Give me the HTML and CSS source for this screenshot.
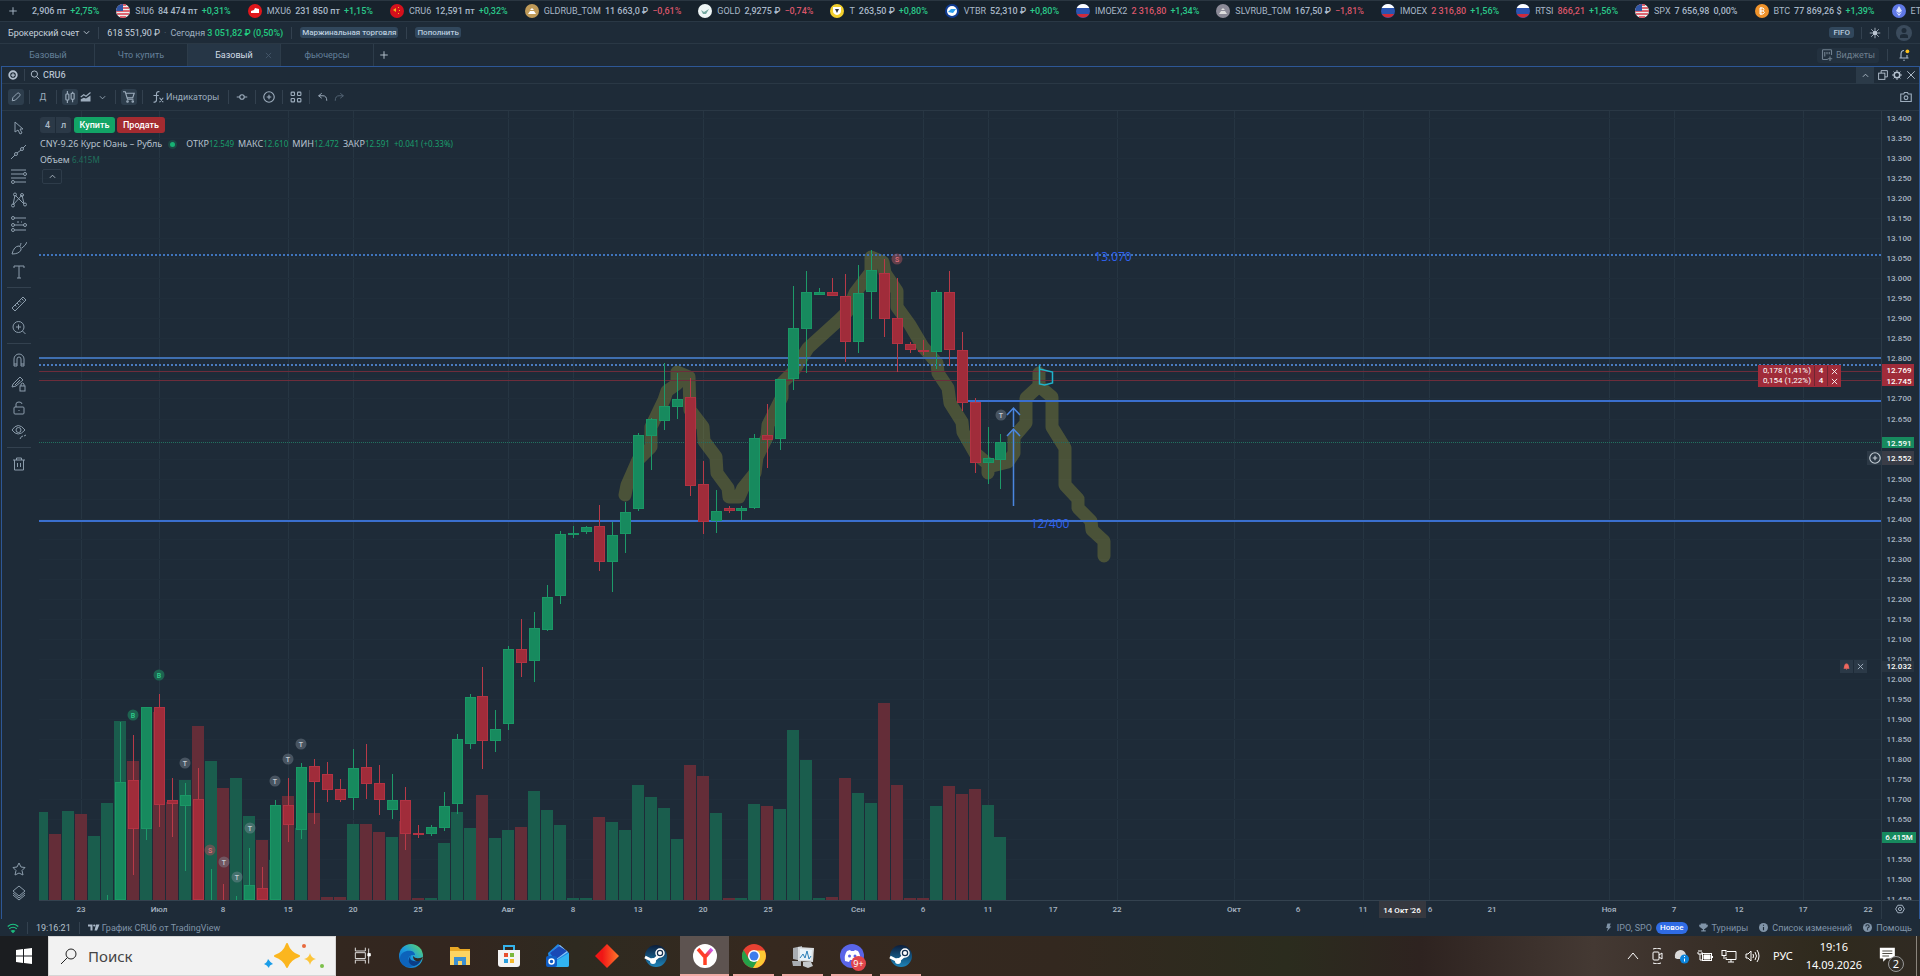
FILE: index.html
```html
<!DOCTYPE html>
<html lang="ru">
  <head>
    <meta charset="UTF-8" />
    <meta name="viewport" content="width=device-width, initial-scale=1.0" />
    <title>CRU6 – Терминал</title>
    <link rel="stylesheet" href="styles.css" />
  </head>
  <body>
    <svg class="sprite" aria-hidden="true">
      <symbol id="i-plus" viewBox="0 0 16 16"><path d="M8 2v12M2 8h12" /></symbol>
      <symbol id="i-down" viewBox="0 0 16 16"><path d="M2 5l6 6 6-6" /></symbol>
      <symbol id="i-up" viewBox="0 0 16 16"><path d="M2 11l6-6 6 6" /></symbol>
      <symbol id="i-close" viewBox="0 0 16 16"><path d="M2 2l12 12M14 2L2 14" /></symbol>
      <symbol id="i-search" viewBox="0 0 16 16"><circle cx="7" cy="6.500" r="5" /><path d="M10.500 10.500L15 15" /></symbol>
      <symbol id="i-link" viewBox="0 0 16 16"><circle cx="8" cy="8" r="6" stroke-width="3" /><path d="M8 5v6M5 8h6" stroke-width="2" /></symbol>
      <symbol id="i-pencil" viewBox="0 0 16 16"><path d="M2 14l1-5 7-7q2-1 3 0l1 1q1 1 0 3l-7 7z" /></symbol>
      <symbol id="i-candles" viewBox="0 0 16 16"><path d="M4.500 0v4M4.500 12v4M11.500 1v2M11.500 11v4" /><rect x="2.500" y="4" width="4" height="8" rx="1" /><rect x="9.500" y="3" width="4" height="8" rx="1" /></symbol>
      <symbol id="i-area" viewBox="0 0 16 16"><path d="M1 14v-3l4-2 3 1 6-4v8z" fill="currentColor" stroke="none" /><path d="M1 8l4-3 3 2 6-5" /></symbol>
      <symbol id="i-cart" viewBox="0 0 16 16"><path d="M0 1h3l3 10h8M3.500 3H15l-2 6H5" /><circle cx="6" cy="14" r="1" /><circle cx="13" cy="14" r="1" /></symbol>
      <symbol id="i-fx" viewBox="0 0 16 16"><path d="M10 1Q6 0 6 4v8q0 3-4 3M2 6h7M10 9l5 6M15 9l-5 6" /></symbol>
      <symbol id="i-compare" viewBox="0 0 16 16"><circle cx="8" cy="8" r="3" /><path d="M1 8h4M11 8h4" /></symbol>
      <symbol id="i-pluscircle" viewBox="0 0 16 16"><circle cx="8" cy="8" r="7" /><path d="M8 5v6M5 8h6" /></symbol>
      <symbol id="i-grid" viewBox="0 0 16 16"><rect x="1.500" y="1.500" width="4.500" height="4.500" rx="1" /><rect x="10" y="1.500" width="4.500" height="4.500" rx="1" /><rect x="1.500" y="10" width="4.500" height="4.500" rx="1" /><rect x="10" y="10" width="4.500" height="4.500" rx="1" /></symbol>
      <symbol id="i-undo" viewBox="0 0 16 16"><path d="M6 2L1 6l5 4M1 6h7q6 0 6 8" /></symbol>
      <symbol id="i-redo" viewBox="0 0 16 16"><path d="M10 2l5 4-5 4M15 6H8q-6 0-6 8" /></symbol>
      <symbol id="i-window" viewBox="0 0 16 16"><path d="M5 5V1h10v10h-4" /><rect x="1" y="5" width="10" height="10" /></symbol>
      <symbol id="i-gear" viewBox="0 0 16 16"><circle cx="8" cy="8" r="4.500" stroke-width="2.500" /><path d="M8 0v3M8 13v3M0 8h3M13 8h3M2.500 2.500l2 2M11.500 11.500l2 2M13.500 2.500l-2 2M4.500 11.500l-2 2" /></symbol>
      <symbol id="i-camera" viewBox="0 0 16 16"><path d="M1 4h4l1-2h4l1 2h4v10H1z" /><circle cx="8" cy="9" r="2.500" /></symbol>
      <symbol id="i-snow" viewBox="0 0 16 16"><path d="M8 1v14M1 8h14M3 3l10 10M13 3L3 13" stroke-width="1" /><circle cx="8" cy="8" r="2" /></symbol>
      <symbol id="i-user" viewBox="0 0 16 16"><circle cx="8" cy="8" r="8" fill="#3b4b5c" stroke="none" /><path d="M8 3a2.400 2.400 0 0 1 0 5a2.400 2.400 0 0 1 0-5M4 13V11q0-2 4-2t4 2v2z" fill="#1e2b38" stroke="none" /></symbol>
      <symbol id="i-widgets" viewBox="0 0 16 16"><path d="M9 14H3q-1 0-1-1V2q0-1 1-1h10q1 0 1 1v6M12 10v6M9 13h6M5 4v6M8 4v3M11 4v3" /></symbol>
      <symbol id="i-bell" viewBox="0 0 16 16"><path d="M2 12h12M4 12V7q0-5 4-5M12 12V8M7 15h2" /><circle cx="12.500" cy="3" r="2.500" fill="#ffc21a" stroke="none" /></symbol>
      <symbol id="i-alarm" viewBox="0 0 16 16"><path d="M2 12q2-2 2-6 0-4 4-4t4 4q0 4 2 6zM7 14h2" fill="#f0685f" stroke="#f0685f" /></symbol>
      <symbol id="i-hex" viewBox="0 0 16 16"><path d="M4.500 2h7L15 8l-3.500 6h-7L1 8z" /><circle cx="8" cy="8" r="2.500" /></symbol>

      <symbol id="t-cursor" viewBox="0 0 16 16"><path d="M4 2v10l3-2 2 4 2-1-2-4h3z" /></symbol>
      <symbol id="t-line" viewBox="0 0 16 16"><path d="M0 15l4-4M6 9l4-3M12 4l3-3" /><circle cx="5" cy="10" r="1.500" /><circle cx="11" cy="5" r="1.500" /></symbol>
      <symbol id="t-fib" viewBox="0 0 16 16"><path d="M0 2h15M0 6h12M0 10h15M4 14h11" /><circle cx="14" cy="6" r="1.500" /><circle cx="2" cy="14" r="1.500" /></symbol>
      <symbol id="t-pattern" viewBox="0 0 16 16"><path d="M2 13L4 3l9 9-2-9-9 10M13 12L9 8" /><circle cx="4" cy="2.500" r="1.500" /><circle cx="11" cy="3" r="1.500" /><circle cx="2" cy="13.500" r="1.500" /><circle cx="14" cy="12.500" r="1.500" /></symbol>
      <symbol id="t-forecast" viewBox="0 0 16 16"><path d="M3 2h12M3 9h10M4 14h11M6 6h2M10 6h1" /><circle cx="2" cy="2" r="1.500" /><circle cx="2" cy="9" r="1.500" /><circle cx="14" cy="9" r="1.500" /><circle cx="2" cy="14" r="1.500" /></symbol>
      <symbol id="t-brush" viewBox="0 0 16 16"><path d="M1 14q2-8 7-8 3 1 2 4-2 4-9 4M9 6q1-2 1-3M11 8q4-3 5-6" /></symbol>
      <symbol id="t-text" viewBox="0 0 16 16"><path d="M3 4V2h10v2M8 2v12M6 14h4" /></symbol>
      <symbol id="t-ruler" viewBox="0 0 16 16"><path d="M1 12L12 1l3 3L4 15zM4 9l1.500 1.500M6 7l2 2M8.500 5l1.500 1.500M10.500 2.500l2 2" /></symbol>
      <symbol id="t-zoom" viewBox="0 0 16 16"><circle cx="7.500" cy="7" r="5.500" /><path d="M11.500 11l3 3M7.500 4.500v5M5 7h5" /></symbol>
      <symbol id="t-magnet" viewBox="0 0 16 16"><path d="M3 14V7a5 5 0 0 1 10 0v7h-3V7q0-2-2-2t-2 2v7zM3 12h3M10 12h3" /></symbol>
      <symbol id="t-penlock" viewBox="0 0 16 16"><path d="M1 11l1-3 7-7 3 3-7 6zM4 9l5-5" /><rect x="9" y="10" width="5" height="5" /><path d="M10 10V8q2-2 3 0v2" /></symbol>
      <symbol id="t-lock" viewBox="0 0 16 16"><rect x="3" y="7" width="10" height="7" rx="1" /><path d="M5 7V4q0-2 3-2t3 2M8 10v1" /></symbol>
      <symbol id="t-eye" viewBox="0 0 16 16"><path d="M1 6q6-9 13 0-7 8-13 0M9 15q1-3 3-3M13 12l2-1" /><circle cx="7.500" cy="6" r="2.500" /></symbol>
      <symbol id="t-trash" viewBox="0 0 16 16"><path d="M2 4h12M5.500 4V2h5v2M3.500 4v10h9V4M6.500 7v4M9.500 7v4" /></symbol>
      <symbol id="t-star" viewBox="0 0 16 16"><path d="M8 2l2 4 4 .5-3 3 1 4.500-4-2-4 2 1-4.500-3-3L6 6z" /></symbol>
      <symbol id="t-layers" viewBox="0 0 16 16"><path d="M8 1l6 5-6 5-6-5zM2 8l6 5 6-5M2 10l6 5 6-5" /></symbol>

      <symbol id="c-us" viewBox="0 0 14 14"><circle cx="7" cy="7" r="7" fill="#eee" /><path d="M1 4h12M0 7h14M1 10h12M4 13h6M4 1h6" stroke="#d83a48" stroke-width="1.500" /><path d="M7 0v7H0a7 7 0 0 1 7-7z" fill="#2f55a5" /></symbol>
      <symbol id="c-mx" viewBox="0 0 14 14"><circle cx="7" cy="7" r="7" fill="#e0161b" /><path d="M3 9V7l3-1 1-2 4 1v4z" fill="#fff" /></symbol>
      <symbol id="c-cn" viewBox="0 0 14 14"><circle cx="7" cy="7" r="7" fill="#d5101c" /><path d="M3 6l3-2v4zM8 3h1v1H8zM9 6h1v1H9zM8 9h1v1H8z" fill="#f3b51b" /></symbol>
      <symbol id="c-gld" viewBox="0 0 14 14"><circle cx="7" cy="7" r="7" fill="#bf9a58" /><path d="M3 10l2-3h4l2 3zM5 6l2-2 2 2z" fill="#fff" /></symbol>
      <symbol id="c-slv" viewBox="0 0 14 14"><circle cx="7" cy="7" r="7" fill="#8b8a97" /><path d="M3 10l2-3h4l2 3zM5 6l2-2 2 2z" fill="#ddd" /></symbol>
      <symbol id="c-gold" viewBox="0 0 14 14"><circle cx="7" cy="7" r="7" fill="#eef5f5" /><path d="M3 6l3 2 5-3-3 5H5z" fill="#74a8a0" /></symbol>
      <symbol id="c-t" viewBox="0 0 14 14"><circle cx="7" cy="7" r="7" fill="#f2cf2c" /><path d="M3 3h8v4q0 3-4 4-4-1-4-4z" fill="#fff" /><path d="M5 5h4L7 9z" fill="#333" /></symbol>
      <symbol id="c-vtb" viewBox="0 0 14 14"><circle cx="7" cy="7" r="7" fill="#0f3b94" /><circle cx="7" cy="7" r="5" fill="#fff" /><path d="M3 8l3-3h5L8 9z" fill="#2ba0ef" /></symbol>
      <symbol id="c-ru" viewBox="0 0 14 14"><circle cx="7" cy="7" r="7" fill="#2b54b0" /><path d="M.7 4a7 7 0 0 1 12.600 0z" fill="#fff" /><path d="M.9 10a7 7 0 0 0 12.200 0z" fill="#cf2b3a" /></symbol>
      <symbol id="c-btc" viewBox="0 0 14 14"><circle cx="7" cy="7" r="7" fill="#f0932b" /><path d="M5 4h3q2 1 0 3 3 1 0 3H5zM5 7h3M6 3v8" stroke="#fff" fill="none" /></symbol>
      <symbol id="c-eth" viewBox="0 0 14 14"><circle cx="7" cy="7" r="7" fill="#5f78e6" /><path d="M7 2l3 5-3 2-3-2zM4 8l3 4 3-4-3 2z" fill="#dfe5ff" /></symbol>

      <linearGradient id="g-edge" x1="0" y1="1" x2="1" y2="0"><stop offset="0" stop-color="#0b5cb8" /><stop offset=".5" stop-color="#1c9ce0" /><stop offset="1" stop-color="#62dc5d" /></linearGradient>
      <linearGradient id="g-red"><stop offset=".3" stop-color="#f01616" /><stop offset="1" stop-color="#ff7a2c" /></linearGradient>
      <linearGradient id="g-steam" x1="0" y1="0" x2="0" y2="1"><stop offset="0" stop-color="#0c1d3a" /><stop offset="1" stop-color="#1d83b9" /></linearGradient>
      <linearGradient id="g-y" x1="0" y1="1" x2="1" y2="0"><stop offset="0" stop-color="#ff4a1c" /><stop offset=".6" stop-color="#ff3a2c" /><stop offset="1" stop-color="#c45cff" /></linearGradient>
      <symbol id="a-steam" viewBox="0 0 24 24"><circle cx="12" cy="12" r="11" fill="url(#g-steam)" /><path d="M1 13l8 4 8-7" stroke="#fff" stroke-width="3" fill="none" /><circle cx="9" cy="17" r="3" fill="#fff" /><circle cx="16" cy="9" r="4" fill="#16304f" stroke="#fff" stroke-width="1.500" /><circle cx="16" cy="9" r="2" fill="#fff" /></symbol>
    </svg>

    <div class="app">
      <div class="ticker" id="ticker">
        <button class="icon-btn" aria-label="Добавить"><svg class="ic"><use href="#i-plus" /></svg></button>
      </div>

      <header class="account">
        <button class="account-name">Брокерский счет <svg class="ic ic-s"><use href="#i-down" /></svg></button>
        <span class="sep"></span>
        <span class="money">618 551,90 ₽</span>
        <span class="dim">·</span>
        <span class="today">Сегодня <b>3 051,82 ₽ (0,50%)</b></span>
        <span class="sep"></span>
        <button class="pill">Маржинальная торговля</button>
        <span class="sep"></span>
        <button class="pill">Пополнить</button>
        <div class="right">
          <span class="pill fifo">FIFO</span>
          <span class="sep"></span>
          <button class="icon-btn" aria-label="Настройки"><svg class="ic"><use href="#i-snow" /></svg></button>
          <span class="sep"></span>
          <button class="icon-btn avatar" aria-label="Профиль"><svg class="ic"><use href="#i-user" /></svg></button>
        </div>
      </header>

      <nav class="tabs">
        <button class="tab">Базовый</button>
        <button class="tab">Что купить</button>
        <button class="tab active">Базовый<svg class="ic ic-s"><use href="#i-close" /></svg></button>
        <button class="tab">фьючерсы</button>
        <button class="icon-btn add" aria-label="Новая вкладка"><svg class="ic ic-m"><use href="#i-plus" /></svg></button>
        <div class="right">
          <button class="widgets"><svg class="ic"><use href="#i-widgets" /></svg>Виджеты</button>
          <span class="sep"></span>
          <button class="icon-btn avatar" aria-label="Уведомления"><svg class="ic"><use href="#i-bell" /></svg></button>
        </div>
      </nav>

      <main class="frame">
        <div class="symbol-row">
          <button class="icon-btn" aria-label="Группа"><svg class="ic ic-m"><use href="#i-link" /></svg></button>
          <span class="sep"></span>
          <button class="symbol"><svg class="ic ic-m"><use href="#i-search" /></svg>CRU6</button>
          <div class="right">
            <button class="fold" aria-label="Свернуть"><svg class="ic ic-s"><use href="#i-up" /></svg></button>
            <button class="icon-btn" aria-label="Окно"><svg class="ic ic-m"><use href="#i-window" /></svg></button>
            <button class="icon-btn" aria-label="Параметры"><svg class="ic ic-m"><use href="#i-gear" /></svg></button>
            <button class="icon-btn" aria-label="Закрыть"><svg class="ic ic-m"><use href="#i-close" /></svg></button>
          </div>
        </div>

        <div class="toolbar">
          <button class="tool on" aria-label="Рисование"><svg class="ic ic-m"><use href="#i-pencil" /></svg></button>
          <span class="sep"></span>
          <button class="tool">Д</button>
          <span class="sep"></span>
          <button class="tool on" aria-label="Свечи"><svg class="ic"><use href="#i-candles" /></svg></button>
          <button class="tool" aria-label="Область"><svg class="ic"><use href="#i-area" /></svg></button>
          <button class="tool" aria-label="Тип графика"><svg class="ic ic-s"><use href="#i-down" /></svg></button>
          <span class="sep"></span>
          <button class="tool on" aria-label="Заявки"><svg class="ic"><use href="#i-cart" /></svg></button>
          <span class="sep"></span>
          <button class="tool wide"><svg class="ic"><use href="#i-fx" /></svg>Индикаторы</button>
          <span class="sep"></span>
          <button class="tool" aria-label="Сравнить"><svg class="ic"><use href="#i-compare" /></svg></button>
          <span class="sep"></span>
          <button class="tool" aria-label="Оповещение"><svg class="ic"><use href="#i-pluscircle" /></svg></button>
          <span class="sep"></span>
          <button class="tool" aria-label="Шаблоны"><svg class="ic"><use href="#i-grid" /></svg></button>
          <span class="sep"></span>
          <button class="tool" aria-label="Отменить"><svg class="ic ic-m"><use href="#i-undo" /></svg></button>
          <button class="tool off" aria-label="Повторить"><svg class="ic ic-m"><use href="#i-redo" /></svg></button>
          <div class="right">
            <button class="tool" aria-label="Снимок"><svg class="ic"><use href="#i-camera" /></svg></button>
          </div>
        </div>

        <div class="workspace">
          <aside class="draw-tools" id="draw-tools"></aside>

          <section class="chart">
            <svg id="plot" viewBox="39 111 1880 808" preserveAspectRatio="xMinYMin meet"></svg>

            <div class="legend">
              <div class="order">
                <div class="qty"><input type="text" value="4" aria-label="Количество" /><span>л</span></div>
                <button class="buy">Купить</button>
                <button class="sell">Продать</button>
              </div>
              <div class="ohlc">
                <span class="name">CNY-9.26 Курс Юань – Рубль</span><i class="dot"></i>
                <span>ОТКР<em>12.549</em></span><span>МАКС<em>12.610</em></span><span>МИН<em>12.472</em></span><span>ЗАКР<em>12.591</em></span>
                <em>+0.041 (+0.33%)</em>
              </div>
              <div class="volume">Объем <em>6.415M</em></div>
              <button class="collapse" aria-label="Скрыть"><svg class="ic ic-s"><use href="#i-up" /></svg></button>
            </div>

            <div class="positions">
              <div class="position"><span>0,178 (1,41%)</span><b>4</b><button aria-label="Закрыть позицию"><svg class="ic ic-s"><use href="#i-close" /></svg></button></div>
              <div class="position"><span>0,154 (1,22%)</span><b>4</b><button aria-label="Закрыть позицию"><svg class="ic ic-s"><use href="#i-close" /></svg></button></div>
            </div>
            <button class="add-order" aria-label="Новая заявка"><svg class="ic"><use href="#i-pluscircle" /></svg></button>
            <div class="alert">
              <button aria-label="Алерт"><svg class="ic ic-s"><use href="#i-alarm" /></svg></button>
              <button aria-label="Удалить"><svg class="ic ic-s"><use href="#i-close" /></svg></button>
            </div>
            <button class="axis-gear" aria-label="Настройки шкалы"><svg class="ic ic-m"><use href="#i-hex" /></svg></button>
          </section>
        </div>
      </main>

      <footer class="status">
        <svg class="ic wifi" viewBox="0 0 16 16"><path d="M1 6q7-6 14 0M3 9q5-4 10 0M6 12q2-1 4 0l-2 2z" /></svg>
        <span class="sep"></span>
        <span class="time">19:16:21</span>
        <span class="sep"></span>
        <a href="#" class="tv"><svg class="tv-logo" viewBox="0 0 24 14"><path d="M0 1h9v12H5V5H0zM16 1h7l-5 12h-5z" /><circle cx="12.500" cy="3" r="2.200" /></svg>График CRU6 от TradingView</a>
        <div class="right">
          <a href="#"><svg class="ic fill" viewBox="0 0 16 16"><path d="M6 1h6l-2 5h3L5 15l2-6H4z" /></svg>IPO, SPO <b class="new">Новое</b></a>
          <a href="#"><svg class="ic fill" viewBox="0 0 16 16"><path d="M3 1h10v2h3q0 5-4 6-1 2-3 2v2h3v2H4v-2h3v-2q-2 0-3-2-4-1-4-6h3z" /></svg>Турниры</a>
          <a href="#"><svg class="ic fill" viewBox="0 0 16 16"><circle cx="8" cy="8" r="8" /><path d="M8 3v2M8 7v6" stroke="#1e2b38" stroke-width="2" /></svg>Список изменений</a>
          <a href="#"><svg class="ic fill" viewBox="0 0 16 16"><circle cx="8" cy="8" r="8" /><path d="M5 6q0-3 3-3t3 3q0 2-3 3v1M8 11v2" fill="none" stroke="#1e2b38" stroke-width="2" /></svg>Помощь</a>
        </div>
      </footer>

      <div class="taskbar">
        <button class="start" aria-label="Пуск"><svg viewBox="0 0 16 16"><path d="M0 2l7-1v6.500H0zM8 1l8-1v7.500H8zM0 8.500h7V15l-7-1zM8 8.500h8V16l-8-1z" fill="#fff" /></svg></button>
        <label class="search">
          <svg class="loupe" viewBox="0 0 16 16"><circle cx="10" cy="6" r="5" /><path d="M6.500 9.500L0 16" /></svg>
          <input type="text" placeholder="Поиск" />
          <svg class="sparkles" viewBox="0 0 64 30"><path d="M25 3q3 9 12 12-9 3-12 11-3-8-12-11 9-3 12-12z" fill="#fbb61f" stroke="#fbb61f" stroke-width="2" stroke-linejoin="round" /><path d="M48 12q1 5 6 6-5 1-6 6-1-5-6-6 5-1 6-6z" fill="#fcc53a" /><path d="M6 18q2 3 5 5-4 1-4 4-2-3-5-4 3-1 4-5z" fill="#1b9de8" /><circle cx="42" cy="5" r="2" fill="#e86a3e" /><circle cx="60" cy="25" r="2" fill="#7cc04b" /></svg>
        </label>
        <div class="apps">
          <button class="app-btn" aria-label="Представление задач"><svg class="taskview" viewBox="0 0 24 24"><path d="M4 2v4h12V2M4 21v-4h12v4M4 8h12v7H4zM20 3v18" /><path d="M19 9h3v3h-3z" fill="#fff" /></svg></button>
          <button class="app-btn" aria-label="Edge"><svg viewBox="0 0 24 24"><circle cx="12" cy="12" r="12" fill="url(#g-edge)" /><path d="M1 14C2 5 16 5 16 11c-9-1-9 9 0 10-7 5-15 0-15-7z" fill="#0d63bb" /><path d="M12 11q-3 5 3 6 5 1 8-2-3 6-8 7-9-3-3-11z" fill="#0a3c86" /><path d="M14 12q3 4 10 1-2 5-7 4-3-1-3-5z" fill="#332820" /></svg></button>
          <button class="app-btn" aria-label="Проводник"><svg viewBox="0 0 24 24"><path d="M2 3h8l2 2h10v16H2z" fill="#e9a825" /><path d="M2 7h20v14H2z" fill="#fcd462" /><path d="M6 21v-8h12v8h-4v-4h-4v4z" fill="#3c8fd0" /></svg></button>
          <button class="app-btn" aria-label="Магазин"><svg viewBox="0 0 24 24"><path d="M7 6V2h10v4" fill="none" stroke="#35b3ea" stroke-width="2" /><path d="M1 6h22v14q0 3-3 3H4q-3 0-3-3z" fill="#f4f4f4" /><path d="M7 9h4v4H7z" fill="#e8502f" /><path d="M13 9h4v4h-4z" fill="#7bb83c" /><path d="M7 15h4v4H7z" fill="#2aa0e0" /><path d="M13 15h4v4h-4z" fill="#f5b92b" /></svg></button>
          <button class="app-btn" aria-label="Почта"><svg viewBox="0 0 24 24"><path d="M2 9L12 0l11 9v12q0 2-2 2H4z" fill="#2186e4" /><path d="M7 7l7-6 8 7-12 8z" fill="#8ec7f7" /><path d="M4 9l9-7 8 5-12 9z" fill="#1949b5" /><path d="M8 18L23 9v12q0 2-2 2H8z" fill="#31b4f2" /><rect y="12" width="11" height="11" rx="2" fill="#0f5dc5" /><circle cx="5.500" cy="17.500" r="2.500" fill="none" stroke="#fff" stroke-width="1.500" /></svg></button>
          <button class="app-btn" aria-label="Торговля"><svg viewBox="0 0 24 24"><path d="M12 0l12 12-12 12L0 12z" fill="url(#g-red)" /></svg></button>
          <button class="app-btn" aria-label="Steam"><svg viewBox="0 0 24 24"><use href="#a-steam" /></svg></button>
          <button class="app-btn open current" aria-label="Яндекс Браузер"><svg viewBox="0 0 24 24"><circle cx="12" cy="12" r="12" fill="#fff" /><path d="M5 5l7 8v8M12 13l7-8" fill="none" stroke="url(#g-y)" stroke-width="3.500" /></svg></button>
          <button class="app-btn open" aria-label="Chrome"><svg viewBox="0 0 24 24"><circle cx="12" cy="12" r="12" fill="#e64132" /><path d="M1.600 6A12 12 0 0 0 11 24l6-9-10 0z" fill="#24a148" /><path d="M22.500 6.500A12 12 0 0 1 11 24l6-10-3-7.500z" fill="#fcc934" /><circle cx="12" cy="12" r="6" fill="#fff" /><circle cx="12" cy="12" r="4.500" fill="#3b7cec" /></svg></button>
          <button class="app-btn open" aria-label="Монитор ресурсов"><svg viewBox="0 0 24 24"><path d="M2 4l9-2v15l-9-2zM1 17h9v5H2z" fill="#a9adb2" /><path d="M7 3l16 1-1 14-15-1z" fill="#d9dde0" /><path d="M9 5l12 1-1 10H9z" fill="#e9f4fa" /><path d="M9 14l3-4 2 4 2-7 2 8 2-3" fill="none" stroke="#2a7fb8" /><path d="M12 18h8l2 4-5 2-5-2z" fill="#c6cacd" /></svg></button>
          <button class="app-btn open" aria-label="Discord"><svg viewBox="0 0 24 24"><circle cx="12" cy="12" r="12" fill="#5965e8" /><path d="M5 17q-1-6 2-10l3-1 1 1h3l1-1 3 1q3 4 2 10l-4 1-1-2h-5l-1 2z" fill="#fff" /><circle cx="9.500" cy="12" r="1.500" fill="#5965e8" /><circle cx="15" cy="12" r="1.500" fill="#5965e8" /></svg><span class="count">9+</span></button>
          <button class="app-btn open" aria-label="Steam"><svg viewBox="0 0 24 24"><use href="#a-steam" /></svg></button>
        </div>
        <div class="tray">
          <button aria-label="Скрытые значки"><svg viewBox="0 0 16 16"><path d="M3 11l5-6 5 6" /></svg></button>
          <button aria-label="Камера"><svg viewBox="0 0 16 16"><path d="M4 1q4-2 8 0M4 15q4 2 8 0M10 7l3-2v6l-3-2" /><rect x="4" y="4" width="6" height="8" rx="1" /></svg></button>
          <button aria-label="OneDrive"><svg viewBox="0 0 16 16"><path d="M2 10q-1-7 5-8 5 0 6 5v4H4z" fill="#d9d9d9" stroke="none" /><circle cx="11.500" cy="11" r="4.500" fill="#0a84dc" stroke="none" /><path d="M11.500 8v1M11.500 10.500v3" /></svg></button>
          <button aria-label="Батарея"><svg viewBox="0 0 16 16"><path d="M1 4v2h4V4M3 6v6h3M2 2v2M4 2v2M15.500 8v2" /><rect x="5.500" y="5.500" width="9" height="7" /><path d="M7 7h6v4H7z" fill="#fff" /></svg></button>
          <button aria-label="Сеть"><svg viewBox="0 0 16 16"><path d="M6 3.500h9v8H5V9M10 11v3M7 14h6" /><rect x="1" y="2.500" width="4" height="5" /><path d="M3 7v4" /></svg></button>
          <button aria-label="Звук"><svg viewBox="0 0 16 16"><path d="M1 6h2l3-3v10l-3-3H1zM8 6q1 2 0 4M10 4q3 4 0 8M12 2q4 6 0 12" /></svg></button>
          <span class="lang">РУС</span>
          <span class="clock">19:16<br />14.09.2026</span>
          <button class="notes" aria-label="Уведомления"><svg viewBox="0 0 24 24"><path d="M1 2h18v13H9l-4 4v-4H1z" fill="#fff" stroke="none" /><path d="M4 6h12M4 9h12M4 12h8" stroke="#2f2b22" /></svg><span>2</span></button>
        </div>
      </div>
    </div>
    <script src="script.js"></script>
  </body>
</html>
```
FILE: styles.css
```css
* {
  box-sizing: border-box;
}
body {
  margin: 0;
  background: #1e2b38;
  color: #a9b8c8;
  font-family: Roboto, "Noto Sans", sans-serif;
  font-size: 9px;
  line-height: 12px;
}
button {
  display: flex;
  align-items: center;
  justify-content: center;
  padding: 0;
  border: none;
  background: none;
  color: inherit;
  font: inherit;
}
a {
  color: inherit;
  text-decoration: none;
}
em {
  font-style: normal;
  color: #1a9e6c;
}
.sprite {
  position: absolute;
  width: 0;
  height: 0;
}
.ic {
  width: 12px;
  height: 12px;
  fill: none;
  stroke: currentColor;
  stroke-width: 1.5;
  flex: none;
}
.ic-s {
  width: 7px;
  height: 7px;
  stroke-width: 2;
}
.ic-m {
  width: 10px;
  height: 10px;
}
.sep {
  width: 1px;
  height: 12px;
  background: #33414f;
  flex: none;
}
.right {
  display: flex;
  align-items: center;
  margin-left: auto;
}
.app {
  display: flex;
  flex-direction: column;
  height: 100vh;
  overflow: hidden;
}

/* quotes line */
.ticker {
  display: flex;
  align-items: center;
  gap: 17px;
  height: 21px;
  padding-left: 8px;
  background: #17222c;
  border-top: 1px solid #2a3641;
  white-space: nowrap;
  overflow: hidden;
  flex: none;
}
.ticker .icon-btn .ic {
  width: 10px;
  height: 10px;
}
.ticker .icon-btn {
  margin-right: -3px;
}
.quote {
  display: flex;
  align-items: center;
  gap: 4px;
  flex: none;
}
.quote svg {
  width: 14px;
  height: 14px;
  margin-right: 1px;
}
.quote b {
  font-weight: 500;
}
.up {
  color: #2bc98a;
}
.down {
  color: #d9566a;
}

/* account line */
.account {
  display: flex;
  align-items: center;
  height: 22px;
  padding: 0 8px;
  border-top: 1px solid #2a3845;
  color: #c8d3df;
  flex: none;
}
.account .sep {
  margin: 0 8px;
}
.account-name {
  gap: 4px;
}
.dim {
  margin: 0 4px;
  color: #5b6b7b;
}
.today {
  color: #9fb0c0;
}
.today b {
  font-weight: 500;
  color: #22cc80;
}
.pill {
  height: 11px;
  padding: 0 2px;
  border-radius: 3px;
  background: #31475c;
  color: #b9cbdd;
  font-size: 8px;
  line-height: 11px;
  font-weight: 500;
}
.fifo {
  padding: 0 4px;
}
.account .right .sep {
  margin: 0 7px;
}
.tabs .sep {
  margin: 0 8px;
}
.avatar {
  width: 16px;
}
.avatar .ic {
  width: 16px;
  height: 16px;
}

/* tabs */
.tabs {
  display: flex;
  align-items: center;
  height: 23px;
  padding: 0 8px 0 2px;
  border-top: 1px solid #2a3845;
  flex: none;
}
.tab {
  position: relative;
  width: 93px;
  height: 22px;
  border-right: 1px solid #2d3c4a;
  color: #64809a;
}
.tab.active {
  background: #263646;
  color: #d3dde7;
}
.tab .ic {
  position: absolute;
  right: 8px;
  color: #46586a;
}
.tabs .add {
  margin-left: 5px;
  color: #b8c4d0;
}
.tabs .avatar .ic {
  width: 12px;
  height: 12px;
}
.widgets {
  gap: 3px;
  height: 15px;
  padding: 0 4px;
  border-radius: 3px;
  background: #23313f;
  color: #70808f;
}

/* chart window */
.frame {
  display: flex;
  flex-direction: column;
  flex: 1;
  min-height: 0;
  margin-left: 1px;
  border: 1px solid #2d5796;
  border-bottom: none;
}
.symbol-row {
  display: flex;
  align-items: center;
  height: 17px;
  padding: 0 3px 0 6px;
  border-bottom: 1px solid #2a3845;
  color: #b4c1cf;
  flex: none;
}
.symbol-row .sep {
  margin: 0 5px 0 6px;
}
.symbol {
  gap: 3px;
  font-weight: 500;
}
.symbol-row .right {
  gap: 4px;
}
.fold {
  width: 18px;
  height: 17px;
  background: #2b3a48;
}
.toolbar {
  display: flex;
  align-items: center;
  height: 27px;
  padding: 0 5px 0 6px;
  border-bottom: 1px solid #2a3845;
  color: #9dadbd;
  flex: none;
}
.toolbar .sep {
  height: 14px;
  margin: 0 5px;
}
.tool {
  min-width: 16px;
  height: 16px;
  border-radius: 3px;
}
.tool.on {
  background: #2d3d4c;
}
.tool.off {
  color: #536474;
}
.tool.wide {
  gap: 2px;
  padding: 0 4px;
}
.workspace {
  display: flex;
  flex: 1;
  min-height: 0;
}
.draw-tools {
  display: flex;
  flex-direction: column;
  align-items: center;
  width: 37px;
  padding: 5px 3px 14px 0;
  color: #8b9cab;
  flex: none;
}
.draw-tools button {
  width: 24px;
  height: 24px;
}
.draw-tools .ic {
  width: 16px;
  height: 16px;
  stroke-width: 1;
}
.draw-tools hr {
  width: 24px;
  height: 1px;
  margin: 3px 0 4px;
  border: none;
  background: #33414f;
}
.draw-tools .bottom {
  margin-top: auto;
}
.chart {
  position: relative;
  flex: 1;
  min-width: 0;
}
#plot {
  display: block;
  width: 100%;
  height: 100%;
}
#plot text {
  font-family: Roboto, "Noto Sans", sans-serif;
  font-size: 8px;
  font-weight: 500;
  fill: #a9b6c3;
}
#plot .note {
  font-family: "Open Sans", "Noto Sans", sans-serif;
  font-size: 12px;
  font-weight: 400;
  fill: #2f62f0;
}
#plot .tag {
  fill: #fff;
}
#plot .mark {
  font-size: 7px;
}

/* chart overlays */
.legend {
  position: absolute;
  top: 6px;
  left: 1px;
  display: flex;
  flex-direction: column;
  align-items: flex-start;
  font-family: "Noto Sans", sans-serif;
  color: #b7c2ce;
}
.legend em {
  font-size: 8px;
}
.order {
  display: flex;
  gap: 2px;
  height: 16px;
  font-family: Roboto, sans-serif;
  font-weight: 500;
  color: #fff;
}
.qty {
  display: flex;
  align-items: center;
  width: 31px;
  margin-right: 1px;
  border-radius: 3px;
  background: #2b3947;
  color: #aab8c5;
}
.qty input {
  width: 16px;
  height: 16px;
  padding: 0;
  border: none;
  border-right: 1px solid #1e2b38;
  background: none;
  color: inherit;
  font: inherit;
  text-align: center;
}
.qty span {
  flex: 1;
  text-align: center;
}
.buy,
.sell {
  width: 41px;
  border-radius: 3px;
  background: #12a466;
}
.sell {
  width: 48px;
  background: #a42b30;
}
.ohlc {
  display: flex;
  align-items: center;
  gap: 4px;
  height: 12px;
  margin-top: 5px;
  white-space: nowrap;
}
.dot {
  width: 5px;
  height: 5px;
  margin: 0 7px 0 4px;
  border-radius: 50%;
  background: #17b274;
  box-shadow: 0 0 0 2px #1c4744;
}
.volume {
  height: 12px;
  margin-top: 4px;
}
.volume em {
  color: #20705c;
}
.collapse {
  width: 20px;
  height: 15px;
  margin: 3px 0 0 2px;
  border: 1px solid #2e3c4a;
  border-radius: 2px;
}
.positions {
  position: absolute;
  top: 254px;
  right: 78px;
  padding: 1px 0;
  background: #a02c3a;
  color: #fff;
  font-size: 8px;
}
.position {
  display: flex;
  height: 10px;
  line-height: 10px;
}
.position span {
  width: 56px;
  padding-right: 3px;
  text-align: right;
}
.position b {
  width: 14px;
  border: solid #6d2632;
  border-width: 0 1px;
  font-weight: 500;
  text-align: center;
}
.position button {
  width: 13px;
}
.add-order {
  position: absolute;
  top: 340px;
  right: 37px;
  width: 15px;
  height: 14px;
  background: #2c3946;
  color: #c5ced6;
}
.alert {
  position: absolute;
  top: 549px;
  right: 52px;
  display: flex;
  gap: 1px;
}
.alert button {
  width: 13px;
  height: 13px;
  background: #2b3947;
}
.axis-gear {
  position: absolute;
  top: 793px;
  right: 14px;
}

/* status line */
.status {
  display: flex;
  align-items: center;
  height: 17px;
  padding: 0 8px 0 7px;
  color: #8094a8;
  flex: none;
}
.status .sep {
  margin: 0 8px;
}
.wifi {
  color: #1dc583;
}
.time {
  color: #b4c0cc;
}
.tv {
  display: flex;
  align-items: center;
  gap: 2px;
}
.tv-logo {
  width: 12px;
  height: 7px;
  fill: #a9b8c8;
}
.status .right {
  gap: 11px;
}
.status .right a {
  display: flex;
  align-items: center;
  gap: 4px;
}
.fill {
  width: 9px;
  height: 9px;
  fill: currentColor;
  stroke: none;
}
.new {
  height: 12px;
  padding: 0 4px;
  border-radius: 6px;
  background: #2f6be4;
  color: #fff;
  font-size: 8px;
  font-weight: 500;
}

/* desktop taskbar */
.taskbar {
  display: flex;
  height: 40px;
  background: linear-gradient(90deg, #33271f 17%, #33261f 24%, #2e2a20 30%, #36291f 40%, #33281f 55%, #2b2c1e 67%, #2e2320 74%, #443933 83%, #3a3029 88%, #2f2a1d 95%, #302a22);
  color: #fff;
  font-family: "Noto Sans", sans-serif;
  flex: none;
}
.start {
  width: 48px;
  background: #1b1d20;
}
.start svg {
  width: 16px;
  height: 16px;
}
.search {
  display: flex;
  align-items: center;
  width: 288px;
  padding: 0 9px 0 12px;
  border: 1px solid #d6d6d6;
  background: #f2f2f2;
}
.loupe {
  width: 16px;
  height: 16px;
  fill: none;
  stroke: #222;
}
.search input {
  flex: 1;
  min-width: 0;
  margin-left: 11px;
  padding: 0;
  border: none;
  outline: none;
  background: none;
  font: 15px "Noto Sans", sans-serif;
}
.search input::placeholder {
  color: #444;
}
.sparkles {
  width: 64px;
  height: 30px;
}
.apps {
  display: flex;
  margin-left: 1px;
}
.app-btn {
  position: relative;
  width: 49px;
  height: 40px;
}
.app-btn svg {
  width: 24px;
  height: 24px;
}
.app-btn .taskview {
  width: 20px;
  height: 20px;
  fill: none;
  stroke: #fff;
}
.app-btn.open::after {
  content: "";
  position: absolute;
  right: 4px;
  bottom: 0;
  left: 4px;
  height: 2px;
  background: #f0a9a4;
}
.app-btn.current {
  background: #5d5350;
}
.app-btn.current::after {
  right: 0;
  left: 0;
}
.count {
  position: absolute;
  right: 10px;
  bottom: 5px;
  width: 15px;
  height: 15px;
  border-radius: 50%;
  background: #e0454b;
  font-size: 9px;
  line-height: 15px;
}
.tray {
  display: flex;
  align-items: center;
  gap: 8px;
  margin-left: auto;
  padding-right: 3px;
}
.tray svg {
  width: 16px;
  height: 16px;
  fill: none;
  stroke: #fff;
}
.lang {
  margin: 0 5px 0 4px;
  font-size: 11px;
}
.clock {
  font-size: 11px;
  line-height: 18px;
  text-align: center;
}
.tray .notes {
  position: relative;
  width: 47px;
  height: 40px;
  border-right: 1px solid #8b857c;
}
.tray .notes svg {
  width: 20px;
  height: 20px;
  margin-right: 8px;
}
.notes span {
  position: absolute;
  right: 12px;
  bottom: 4px;
  width: 16px;
  height: 16px;
  border: 1px solid #999;
  border-radius: 50%;
  background: #332f28;
  font-size: 11px;
  line-height: 14px;
}
```
FILE: script.js
```js
// quotes: icon, name, price, change, price class
const quotes = [
  ["", "", "2,906 пт", "+2,75%"],
  ["us", "SIU6", "84 474 пт", "+0,31%"],
  ["mx", "MXU6", "231 850 пт", "+1,15%"],
  ["cn", "CRU6", "12,591 пт", "+0,32%"],
  ["gld", "GLDRUB_TOM", "11 663,0 ₽", "−0,61%"],
  ["gold", "GOLD", "2,9275 ₽", "−0,74%"],
  ["t", "T", "263,50 ₽", "+0,80%"],
  ["vtb", "VTBR", "52,310 ₽", "+0,80%"],
  ["ru", "IMOEX2", "2 316,80", "+1,34%", "down"],
  ["slv", "SLVRUB_TOM", "167,50 ₽", "−1,81%"],
  ["ru", "IMOEX", "2 316,80", "+1,56%", "down"],
  ["ru", "RTSI", "866,21", "+1,56%", "down"],
  ["us", "SPX", "7 656,98", "0,00%"],
  ["btc", "BTC", "77 869,26 $", "+1,39%"],
  ["eth", "ETH", "", ""],
];
const ticker = document.getElementById("ticker");
quotes.forEach(([icon, name, price, change, cls]) => {
  const dir = change[0] == "+" ? "up" : change[0] == "−" ? "down" : "";
  ticker.innerHTML += `<div class="quote">
    ${icon ? `<svg><use href="#c-${icon}" /></svg><span>${name}</span>` : ""}
    <b class="${cls || ""}">${price}</b><b class="${dir}">${change}</b></div>`;
});

// drawing tools, "-" is a divider
const tools = [
  "cursor", "line", "fib", "pattern", "forecast", "brush", "text", "-",
  "ruler", "zoom", "-", "magnet", "penlock", "lock", "eye", "-", "trash",
];
const toolBtn = (t, cls = "") =>
  `<button class="${cls}" aria-label="${t}"><svg class="ic"><use href="#t-${t}" /></svg></button>`;
document.getElementById("draw-tools").innerHTML =
  tools.map((t) => (t == "-" ? "<hr />" : toolBtn(t))).join("") +
  toolBtn("star", "bottom") + toolBtn("layers");

// chart geometry
const LEFT = 39, RIGHT = 1882, TOP = 111, BOTTOM = 900;
const barX = (i) => 81 + Math.round(i * 12.95);
const priceY = (p) => 118 + (13.4 - p) * 400.7;
const GREEN = "#178a5e", RED = "#a02c3a";

// [top, colour] from bar -3 on
const volumes = [
  [812, "g"], [834, "r"], [811, "g"], [814, "r"], [836, "g"], [803, "g"], [721, "g"], [761, "r"],
  [780, "g"], [712, "r"], [802, "r"], [780, "g"], [726, "r"], [761, "g"], [788, "r"], [778, "g"],
  [816, "g"], [840, "r"], [860, "g"], [796, "r"], [828, "g"], [813, "r"], [897, "r"], [897, "r"],
  [824, "g"], [824, "r"], [832, "r"], [837, "g"], [821, "r"], [898, "r"], [898, "g"], [843, "g"],
  [812, "g"], [828, "g"], [795, "r"], [838, "g"], [830, "g"], [827, "r"], [791, "g"], [810, "g"],
  [825, "g"], [898, "g"], [898, "g"], [817, "r"], [822, "g"], [830, "g"], [785, "g"], [797, "g"],
  [808, "g"], [839, "g"], [765, "r"], [776, "r"], [813, "g"], [898, "r"], [898, "g"], [804, "g"],
  [806, "r"], [809, "g"], [730, "g"], [760, "g"], [898, "g"], [897, "r"], [778, "r"], [793, "g"],
  [803, "g"], [703, "r"], [785, "r"], [898, "r"], [898, "r"], [806, "g"], [786, "r"], [794, "r"],
  [789, "r"], [805, "g"], [837, "g"],
];
// [high, body top, body bottom, low, colour] from bar 2 on
const candles = [
  [895, 900, 900, 900, "g"], [722, 782, 900, 900, "g"], [735, 780, 829, 875, "r"], [707, 707, 829, 840, "g"],
  [694, 707, 805, 827, "r"], [778, 800, 804, 837, "r"], [783, 795, 806, 871, "g"], [768, 799, 900, 900, "r"],
  [869, 900, 900, 900, "g"], [884, 900, 900, 900, "r"], [896, 900, 900, 900, "g"], [848, 885, 900, 900, "g"],
  [867, 888, 900, 900, "r"], [800, 805, 900, 900, "g"], [778, 805, 825, 842, "r"], [763, 767, 830, 839, "g"],
  [759, 766, 782, 824, "r"], [762, 774, 790, 802, "r"], [779, 789, 800, 802, "r"], [749, 768, 798, 810, "g"],
  [744, 767, 784, 799, "r"], [765, 783, 800, 815, "r"], [774, 800, 810, 819, "g"], [787, 800, 834, 850, "r"],
  [825, 833, 835, 838, "r"], [825, 827, 834, 836, "g"], [792, 806, 828, 831, "g"], [734, 739, 804, 814, "g"],
  [694, 697, 744, 749, "g"], [667, 696, 741, 769, "r"], [710, 729, 741, 752, "g"], [646, 649, 724, 730, "g"],
  [619, 649, 663, 677, "r"], [612, 628, 661, 682, "g"], [585, 597, 630, 631, "g"], [531, 534, 596, 604, "g"],
  [526, 533, 535, 538, "g"], [526, 527, 532, 534, "g"], [505, 526, 562, 571, "r"], [522, 535, 562, 592, "g"],
  [502, 512, 534, 553, "g"], [433, 435, 509, 511, "g"], [418, 419, 436, 470, "g"], [363, 406, 421, 430, "g"],
  [373, 399, 407, 419, "g"], [378, 397, 486, 496, "r"], [461, 484, 522, 534, "r"], [490, 511, 521, 533, "g"],
  [506, 508, 511, 513, "r"], [506, 508, 511, 520, "g"], [434, 438, 508, 509, "g"], [404, 435, 440, 468, "r"],
  [379, 379, 439, 450, "g"], [286, 328, 379, 390, "g"], [271, 292, 329, 373, "g"], [288, 292, 295, 295, "g"],
  [278, 292, 296, 296, "r"], [274, 296, 342, 362, "r"], [265, 293, 342, 353, "g"], [250, 270, 292, 319, "g"],
  [259, 273, 319, 337, "r"], [278, 318, 344, 372, "r"], [342, 344, 350, 353, "r"], [340, 350, 352, 355, "r"],
  [290, 292, 352, 369, "g"], [271, 292, 350, 366, "r"], [332, 350, 403, 411, "r"], [398, 402, 463, 473, "r"],
  [427, 458, 463, 484, "g"], [434, 442, 460, 489, "g"],
];
const dates = [
  [81, "23"], [159, "Июл"], [223, "8"], [288, "15"], [353, "20"], [418, "25"], [508, "Авг"], [573, "8"],
  [638, "13"], [703, "20"], [768, "25"], [858, "Сен"], [923, "6"], [988, "11"], [1053, "17"], [1117, "22"],
  [1234, "Окт"], [1298, "6"], [1363, "11"], [1430, "6"], [1492, "21"], [1609, "Ноя"], [1674, "7"],
  [1739, "12"], [1803, "17"], [1868, "22"],
];
const marks = [
  [159, 675, "B"], [133, 715, "B"], [185, 763, "T"], [210, 850, "S"], [224, 862, "T"], [237, 877, "T"],
  [250, 828, "T"], [275, 781, "T"], [288, 759, "T"], [301, 744, "T"], [897, 259, "S"], [1001, 415, "T"],
];
const markColors = { B: ["#1d6350", "#2fd08c"], T: ["#8793a066", "#c6ced6"], S: ["#a0505a88", "#e0707c"] };
const brush =
  "M625 495L627 485 638 460 651 447 651 427 664 400 667 391 677 384 677 372 689 377 690 410 703 427 704 441 716 457 " +
  "717 473 728 488 729 497 739 497 743 488 755 473 757 457 767 437 768 425 782 397 782 383 793 372 808 348 840 319 " +
  "847 312 855 293 871 272 871 257 883 262 885 273 897 291 897 307 910 325 923 347 937 363 938 373 948 388 950 403 " +
  "962 422 963 432 975 453 988 464 988 473 988 467 1008 462 1014 453 1014 437 1026 423 1026 398 1039 386 1039 373 " +
  "1039 386 1052 397 1052 427 1065 448 1065 485 1078 499 1078 508 1091 521 1092 530 1104 541 1104 556";

const line = (x1, y1, x2, y2, color, extra = "") =>
  `<path d="M${x1} ${y1}L${x2} ${y2}" stroke="${color}" ${extra} />`;
const rect = (x, y, w, h, fill, extra = "") =>
  `<rect x="${x}" y="${y}" width="${w}" height="${h}" fill="${fill}" ${extra} />`;
const text = (x, y, s, cls = "") => `<text x="${x}" y="${y}" text-anchor="middle" class="${cls}">${s}</text>`;

let out = "";
// grid
[81, 159, 288, 353, 508, 573, 703, 923, 988, 1117, 1234, 1363, 1429, 1609, 1674, 1803].forEach((x) => {
  out += line(x + 0.5, TOP, x + 0.5, BOTTOM, "#263542");
});
for (let p = 13.4; p > 11.46; p -= 0.05) {
  const y = Math.round(priceY(p)) + 0.5;
  out += line(LEFT, y, RIGHT, y, "#202e3b");
}
volumes.forEach(([y, c], n) => {
  const x = Math.max(barX(n - 3) - 6, LEFT);
  out += rect(x, y, barX(n - 3) + 6 - x, BOTTOM - y, c == "g" ? "#1a5d4d" : "#642d38");
});
out += `<path d="${brush}" fill="none" stroke="#e8e03c" stroke-opacity=".22" stroke-width="13" stroke-linecap="round" stroke-linejoin="round" />`;

// levels
out += line(LEFT, 255, RIGHT, 255, "#3f74bd", 'stroke-width="2" stroke-dasharray="2 2"');
out += line(LEFT, 358, RIGHT, 358, "#3f6fb0", 'stroke-width="2"');
out += line(LEFT, 365, RIGHT, 365, "#4a7cc0", 'stroke-width="2" stroke-dasharray="2 2"');
out += line(LEFT, 371.5, RIGHT, 371.5, "#6d2d3b");
out += line(LEFT, 380.5, RIGHT, 380.5, "#6d2d3b");
out += line(968, 401, RIGHT, 401, "#3a6fce", 'stroke-width="2"');
out += line(LEFT, 442.5, RIGHT, 442.5, "#22705f", 'stroke-dasharray="1 1"');
out += line(LEFT, 521, RIGHT, 521, "#3a6fce", 'stroke-width="2"');

candles.forEach(([hi, top, bottom, lo, c], n) => {
  const x = barX(n + 2);
  out += line(x + 0.5, hi, x + 0.5, lo, c == "g" ? "#1d9a69" : "#b83a48");
  if (bottom > top) {
    out += rect(x - 4.5, top + 0.5, 10, Math.max(bottom - top - 1, 1), c == "g" ? GREEN : RED,
      `stroke="${c == "g" ? "#1a9765" : "#b23343"}"`);
  }
});

// arrows, box and notes
out += `<path d="M1013.500 506V430M1013.500 427V408M1007 415l6.500-7 6.500 7M1007 436l6.500-7 6.500 7" fill="none" stroke="#4a86e0" stroke-width="1.500" />`;
out += `<path d="M1039.500 365v19l5 1 8-2v-11l-13-3" fill="none" stroke="#20b4cc" stroke-width="1.500" />`;
out += text(1113, 261, "13.070", "note") + text(1050, 528, "12/400", "note");
marks.forEach(([x, y, s]) => {
  out += `<circle cx="${x}" cy="${y}" r="5.500" fill="${markColors[s][0]}" />`;
  out += `<text x="${x}" y="${y + 2.5}" text-anchor="middle" class="mark" style="fill:${markColors[s][1]}">${s}</text>`;
});

// price scale
out += rect(RIGHT, TOP, 37, BOTTOM - TOP + 19, "#1e2b38");
for (let n = 0; n < 40; n++) {
  const p = 13.4 - n * 0.05;
  if ([13, 17, 36].includes(n)) continue; // covered by tags
  out += text(1899, Math.round(priceY(p)) + 3, p.toFixed(3));
}
out += rect(RIGHT, 364, 32, 22, RED) + text(1899, 373, "12.769", "tag") + text(1899, 384, "12.745", "tag");
out += rect(RIGHT, 437, 32, 11, GREEN) + text(1899, 446, "12.591", "tag");
out += rect(RIGHT, 451, 32, 14, "#3a3d47") + text(1899, 461, "12.552", "tag");
out += rect(RIGHT, 661, 32, 11, "#283440") + text(1899, 669, "12.032", "tag");
out += rect(RIGHT, 832, 34, 11, GREEN) + text(1899, 840, "6.415M", "tag");

// time scale
out += rect(LEFT, BOTTOM, 1880, 19, "#1e2b38");
out += line(LEFT, BOTTOM + 0.5, 1919, BOTTOM + 0.5, "#34424f");
dates.forEach(([x, s]) => (out += text(x, 912, s)));
out += rect(1379, 901, 47, 17, "#36383f") + text(1402, 913, "14 Окт '26", "tag");
out += line(RIGHT - 0.5, TOP, RIGHT - 0.5, 919, "#2c3a47");

document.getElementById("plot").innerHTML = out;
```
